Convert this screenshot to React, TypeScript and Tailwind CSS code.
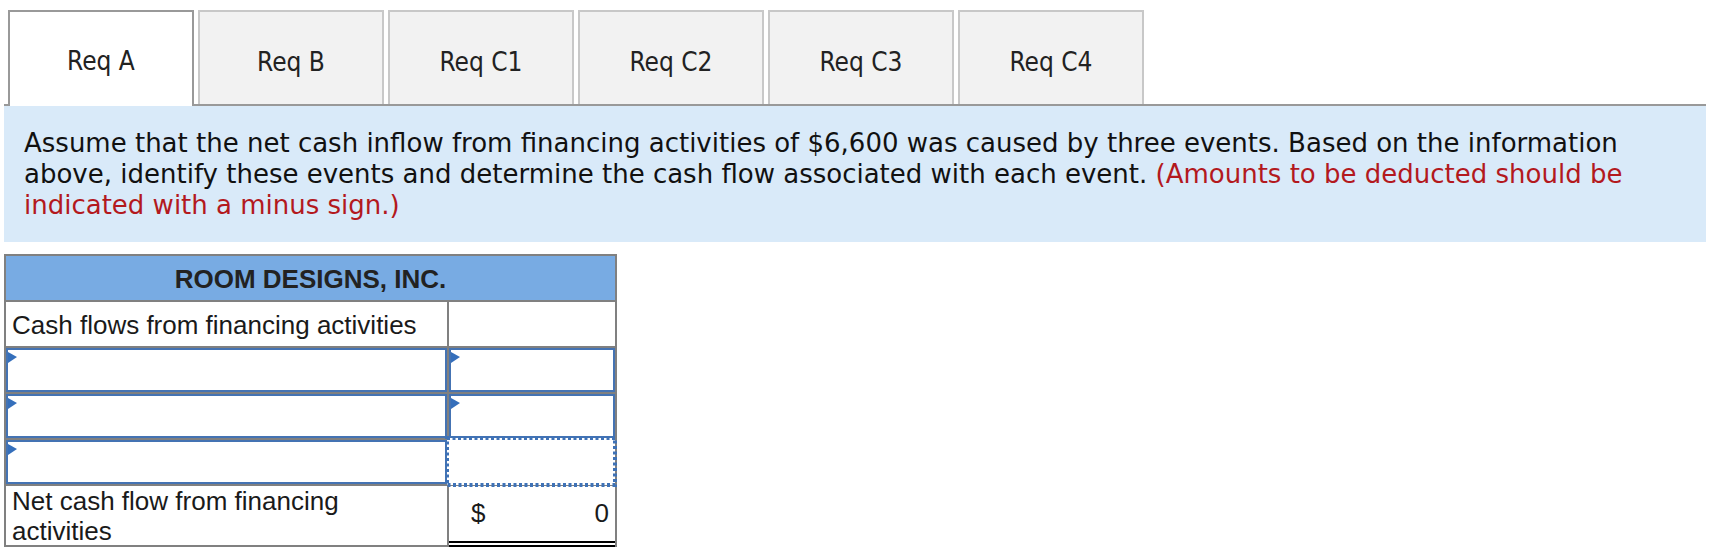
import React from "react";

const tahoma = "font-['DejaVu_Sans_Condensed','DejaVu_Sans',sans-serif] [font-stretch:condensed]";
const verdana = "font-['DejaVu_Sans','Noto_Sans',sans-serif]";

function Tri() {
  return (
    <div className="absolute left-0 top-[2px] w-0 h-0 border-t-[5px] border-b-[6px] border-l-[9px] border-t-transparent border-b-transparent border-l-[#356fbb]" />
  );
}

function InputBox({ tri = true }: { tri?: boolean }) {
  return (
    <div className="relative h-full w-full border-2 border-[#4473b3] bg-white">
      {tri && <Tri />}
    </div>
  );
}

function DottedBox() {
  return (
    <div className="absolute -left-[4px] -top-[4px] w-[172px] h-[51px]">
      <svg width="172" height="51" className="block">
        <rect
          x="2"
          y="2"
          width="168"
          height="47"
          fill="white"
          stroke="#3f72b6"
          strokeWidth="4"
          strokeDasharray="3 2.5"
        />
      </svg>
    </div>
  );
}

export default function App() {
  const tabs = ["Req A", "Req B", "Req C1", "Req C2", "Req C3", "Req C4"];
  return (
    <div className="w-[1716px] h-[556px] bg-white overflow-hidden pt-[10px] pl-[4px]">
      <div className="w-[1702px]">
        {/* Tabs */}
        <div className="flex items-start gap-[4px] pl-[4px] h-[96px] border-b-2 border-[#999]">
          {tabs.map((t, i) =>
            i === 0 ? (
              <div
                key={t}
                className={`w-[186px] h-[96px] shrink-0 border-2 border-b-0 border-[#999] bg-white flex items-center justify-center pt-[4px] text-[26px] text-[#222] ${tahoma}`}
              >
                {t}
              </div>
            ) : (
              <div
                key={t}
                className={`w-[186px] h-[94px] shrink-0 border-2 border-b-0 border-[#c8c8c8] bg-[#f2f2f2] flex items-center justify-center pt-[8px] text-[26px] text-[#222] ${tahoma}`}
              >
                {t}
              </div>
            )
          )}
        </div>

        {/* Question panel */}
        <div className={`h-[136px] bg-[#d9eaf9] pl-[20px] pt-[22px] text-[26px] leading-[31px] text-[#111] ${verdana}`}>
          <div className="whitespace-nowrap">
            Assume that the net cash inflow from financing activities of $6,600 was caused by three events. Based on the information
          </div>
          <div className="whitespace-nowrap">
            above, identify these events and determine the cash flow associated with each event.{" "}
            <span className="text-[#b3191e]">(Amounts to be deducted should be</span>
          </div>
          <div className="whitespace-nowrap text-[#b3191e]">indicated with a minus sign.)</div>
        </div>

        {/* Table */}
        <div className="mt-[12px] w-[613px] border-2 border-b-0 border-[#808080] font-['Liberation_Sans',Arial,sans-serif] text-[26px] text-[#1a1a1a]">
          <div className="h-[46px] bg-[#78abe3] border-b-2 border-[#808080] flex items-center justify-center pt-[2px] font-bold text-[#222]">
            ROOM DESIGNS, INC.
          </div>
          <div className="flex h-[46px] border-b-2 border-[#808080]">
            <div className="w-[443px] border-r-2 border-[#808080] flex items-center pl-[6px] pt-[2px]">
              Cash flows from financing activities
            </div>
            <div className="flex-1" />
          </div>
          {[0, 1, 2].map((r) => (
            <div key={r} className="flex h-[46px] border-b-2 border-[#808080]">
              <div className="w-[443px] border-r-2 border-[#808080]">
                <InputBox />
              </div>
              <div className="flex-1 relative">
                {r < 2 ? <InputBox /> : <DottedBox />}
              </div>
            </div>
          ))}
          <div className="flex h-[61px]">
            <div className="w-[443px] border-r-2 border-b-2 border-[#808080] pl-[6px] leading-[30px]">
              Net cash flow from financing
              <br />
              activities
            </div>
            <div className="flex-1 border-b-[6px] border-double border-black flex items-center justify-between pl-[22px] pr-[6px]">
              <span>$</span>
              <span>0</span>
            </div>
          </div>
        </div>
      </div>
    </div>
  );
}
